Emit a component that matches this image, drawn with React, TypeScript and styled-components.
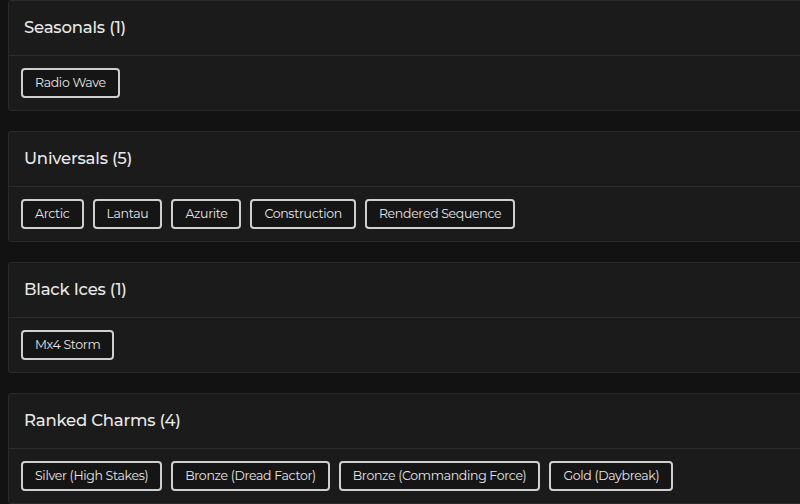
import React from "react";
import styled, { createGlobalStyle } from "styled-components";

const Global = createGlobalStyle`
  html, body { margin: 0; padding: 0; background: #121212; overflow: hidden; }
  body { font-family: "Montserrat", "Open Sans", "Noto Sans", sans-serif; }
`;

const Page = styled.div`
  display: flex;
  flex-direction: column;
  gap: 20px;
  padding: 0 0 0 8px;
  width: 820px;
`;

const Card = styled.section`
  background: #1b1b1b;
  border: 1px solid #2a2a2a;
  border-radius: 3px;
`;

const Header = styled.div`
  box-sizing: border-box;
  height: 55px;
  display: flex;
  align-items: center;
  padding: 0 0 2px 15px;
  border-bottom: 1px solid #2c2c2c;
  color: #e8e8e8;
  font-size: 16.5px;
  font-weight: 500;
  letter-spacing: -0.2px;
`;

const Body = styled.div`
  display: flex;
  flex-wrap: wrap;
  gap: 9px;
  padding: 12px 12px;
`;

const Chip = styled.span`
  box-sizing: border-box;
  height: 30px;
  display: inline-flex;
  align-items: center;
  padding: 0 12px 1px;
  border: 2px solid #cfcfcf;
  border-radius: 4px;
  background: #151515;
  color: #e6e6e6;
  font-size: 12.5px;
  letter-spacing: -0.32px;
  white-space: nowrap;
`;

const sections: { title: string; items: string[] }[] = [
  { title: "Seasonals", items: ["Radio Wave"] },
  { title: "Universals", items: ["Arctic", "Lantau", "Azurite", "Construction", "Rendered Sequence"] },
  { title: "Black Ices", items: ["Mx4 Storm"] },
  {
    title: "Ranked Charms",
    items: ["Silver (High Stakes)", "Bronze (Dread Factor)", "Bronze (Commanding Force)", "Gold (Daybreak)"],
  },
];

export default function App() {
  return (
    <>
      <Global />
      <Page>
        {sections.map((s) => (
          <Card key={s.title}>
            <Header>
              {s.title} ({s.items.length})
            </Header>
            <Body>
              {s.items.map((i) => (
                <Chip key={i}>{i}</Chip>
              ))}
            </Body>
          </Card>
        ))}
      </Page>
    </>
  );
}
